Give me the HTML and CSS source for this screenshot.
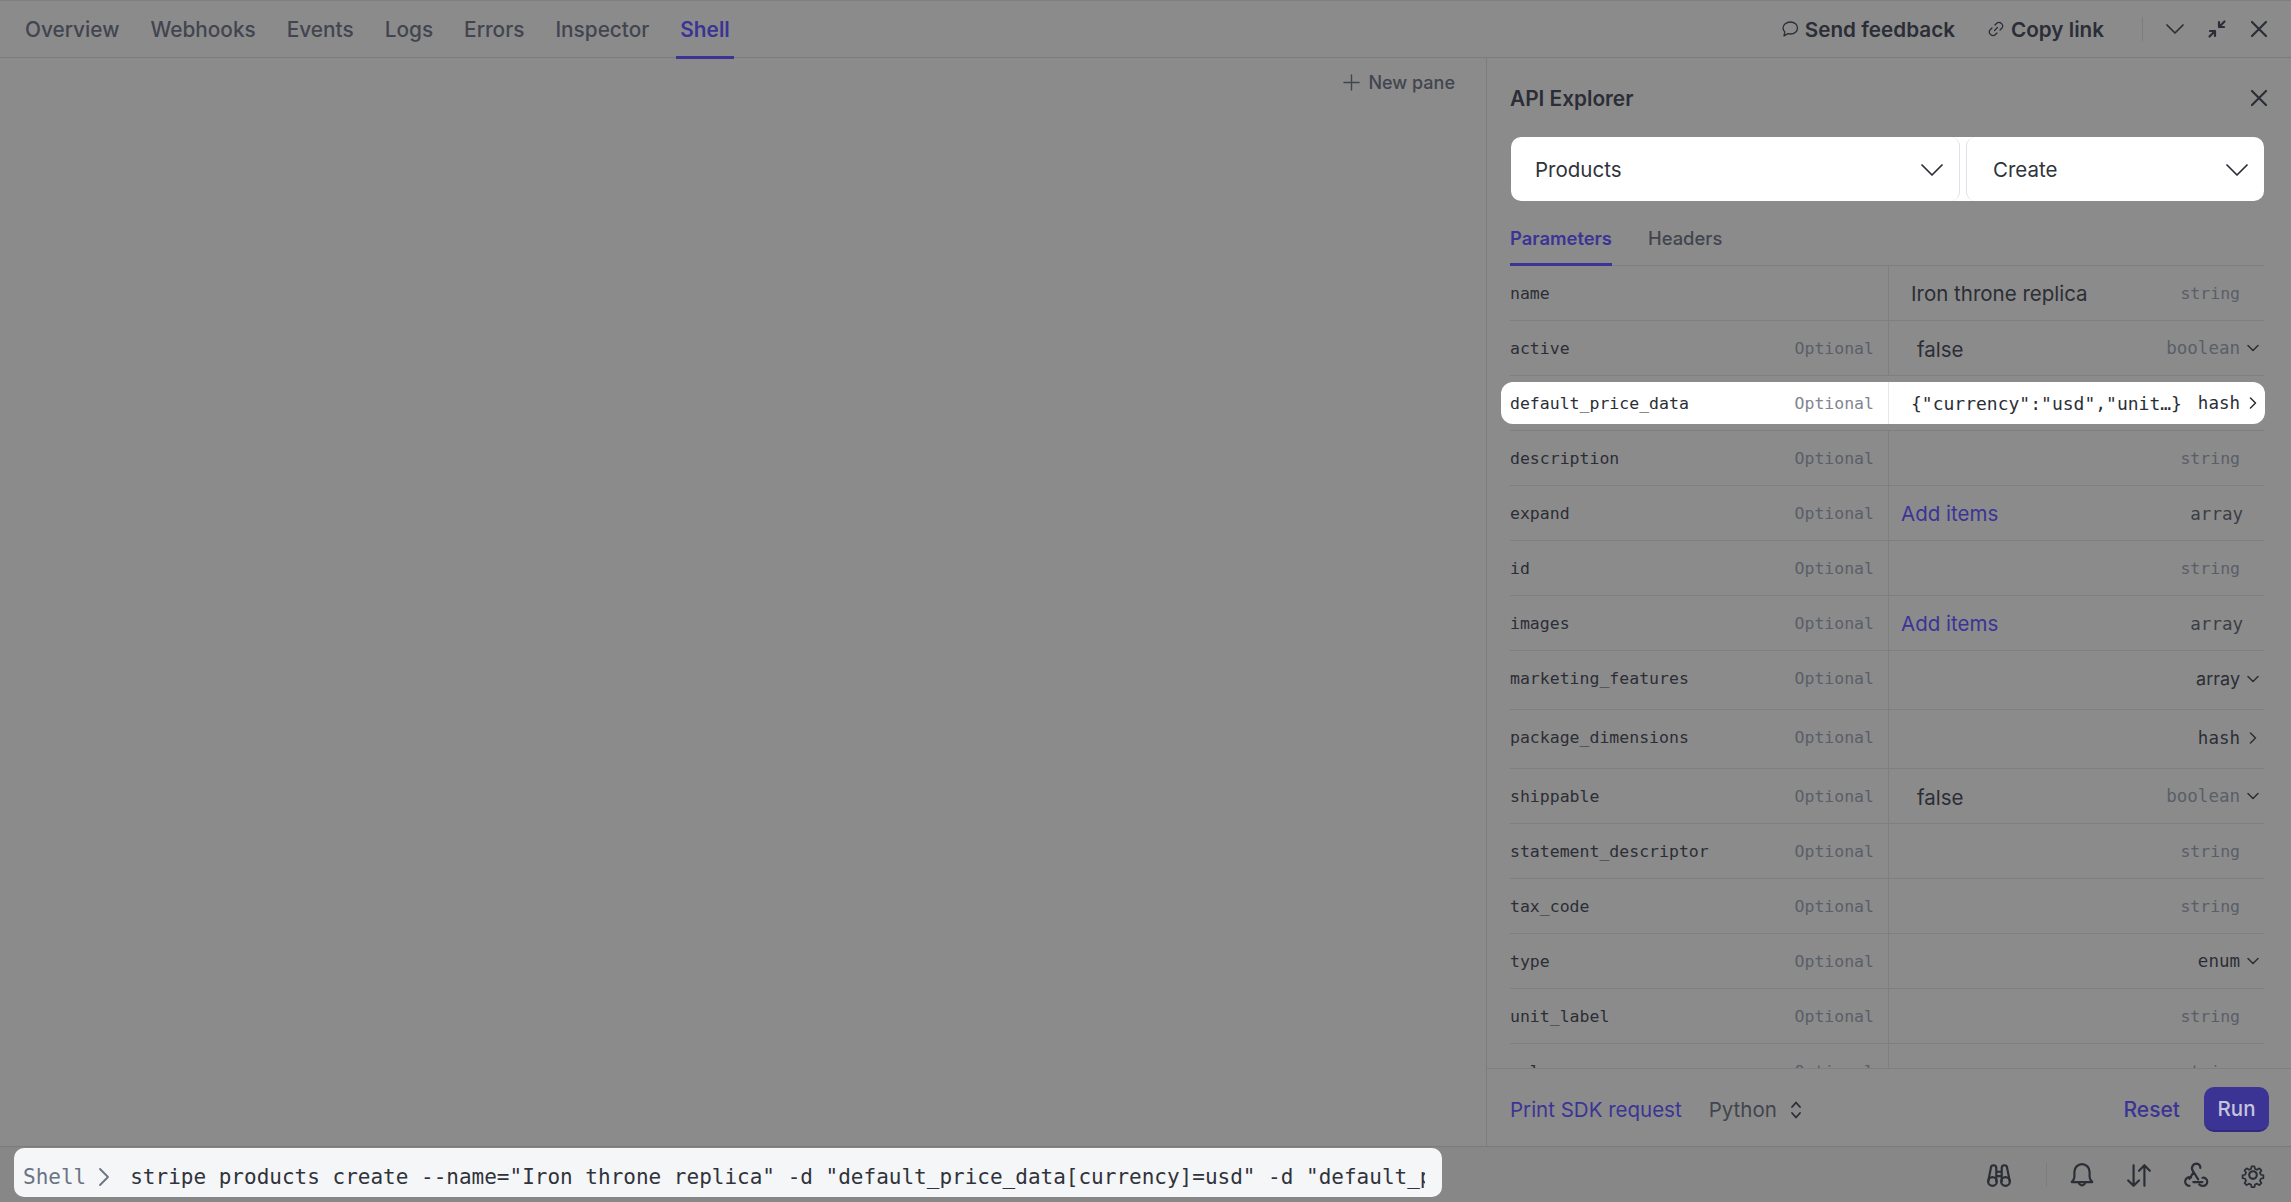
FILE: index.html
```html
<!DOCTYPE html>
<html lang="en">
<head>
<meta charset="utf-8">
<title>Shell</title>
<link rel="stylesheet" href="styles.css">
</head>
<body>
<div class="app">
  <header class="topbar">
    <nav class="tabs">
      <a class="tab">Overview</a><a class="tab">Webhooks</a><a class="tab">Events</a><a class="tab">Logs</a><a class="tab">Errors</a><a class="tab">Inspector</a><a class="tab active">Shell</a>
    </nav>
    <div class="top-actions">
      <a class="action"><svg class="ic16" viewBox="0 0 18 18"><path d="M9.500 2C5.400 2 2 4.700 2 8c0 1.500.7 2.900 1.800 3.900L3 15.800l4-2.100c.8.200 1.600.300 2.500.300 4.100 0 7-2.700 7-6s-2.900-6-7-6z"/></svg>Send feedback</a>
      <a class="action"><svg class="ic16" viewBox="0 0 18 18"><path d="M7.500 10.500l3-3M8 5l1.800-1.800a3 3 0 0 1 4.300 0l.7.700a3 3 0 0 1 0 4.300L13 10M10 13l-1.800 1.800a3 3 0 0 1-4.300 0l-.7-.7a3 3 0 0 1 0-4.300L5 8"/></svg>Copy link</a>
      <span class="vsep"></span>
      <svg class="win" viewBox="0 0 20 20"><path d="M2 6l8 8 8-8"/></svg>
      <svg class="win" viewBox="0 0 20 20"><path class="thick" d="M17.500 2.500L12 8M12 3v5h5M2.500 17.500L8 12M3 12h5v5"/></svg>
      <svg class="win" viewBox="0 0 20 20"><path class="thick" d="M3 3l14 14M17 3L3 17"/></svg>
    </div>
  </header>

  <main class="main">
    <section class="pane">
      <a class="new-pane"><svg class="plus" viewBox="0 0 18 18"><path d="M9 1v16M1 9h16"/></svg>New pane</a>
    </section>

    <aside class="panel">
      <div class="panel-title">
        <h2>API Explorer</h2>
        <svg class="win" viewBox="0 0 20 20"><path class="thick" d="M3 3l14 14M17 3L3 17"/></svg>
      </div>
      <div class="selects">
        <div class="select first">Products<svg class="chev" viewBox="0 0 22 14"><path d="M1 2l10 10L21 2"/></svg></div>
        <div class="select second">Create<svg class="chev" viewBox="0 0 22 14"><path d="M1 2l10 10L21 2"/></svg></div>
      </div>
      <div class="subtabs">
        <a class="subtab on">Parameters</a><a class="subtab">Headers</a>
      </div>
      <div class="params">
        <div class="row"><div class="pname"><code>name</code></div><div class="pval"><span class="val">Iron throne replica</span><code class="t-str">string</code></div></div>
        <div class="row"><div class="pname"><code>active</code><code class="opt">Optional</code></div><div class="pval"><span class="val bool">false</span><code class="t-big muted">boolean</code><svg class="mini" viewBox="0 0 12 12"><path d="M1 3.500l5 5 5-5"/></svg></div></div>
        <div class="row hl"><div class="pname"><code>default_price_data</code><code class="opt">Optional</code></div><div class="pval"><code class="json">{"currency":"usd","unit…}</code><code class="t-big">hash</code><svg class="mini" viewBox="0 0 12 12"><path d="M3.500 1l5 5-5 5"/></svg></div></div>
        <div class="row"><div class="pname"><code>description</code><code class="opt">Optional</code></div><div class="pval"><span class="val"></span><code class="t-str">string</code></div></div>
        <div class="row"><div class="pname"><code>expand</code><code class="opt">Optional</code></div><div class="pval link-cell"><a class="add">Add items</a><code class="t-arr">array</code></div></div>
        <div class="row"><div class="pname"><code>id</code><code class="opt">Optional</code></div><div class="pval"><span class="val"></span><code class="t-str">string</code></div></div>
        <div class="row"><div class="pname"><code>images</code><code class="opt">Optional</code></div><div class="pval link-cell"><a class="add">Add items</a><code class="t-arr">array</code></div></div>
        <div class="row tall"><div class="pname"><code>marketing_features</code><code class="opt">Optional</code></div><div class="pval"><span class="val"></span><span class="t-sans">array</span><svg class="mini" viewBox="0 0 12 12"><path d="M1 3.500l5 5 5-5"/></svg></div></div>
        <div class="row tall"><div class="pname"><code>package_dimensions</code><code class="opt">Optional</code></div><div class="pval"><span class="val"></span><code class="t-big">hash</code><svg class="mini" viewBox="0 0 12 12"><path d="M3.500 1l5 5-5 5"/></svg></div></div>
        <div class="row"><div class="pname"><code>shippable</code><code class="opt">Optional</code></div><div class="pval"><span class="val bool">false</span><code class="t-big muted">boolean</code><svg class="mini" viewBox="0 0 12 12"><path d="M1 3.500l5 5 5-5"/></svg></div></div>
        <div class="row"><div class="pname"><code>statement_descriptor</code><code class="opt">Optional</code></div><div class="pval"><span class="val"></span><code class="t-str">string</code></div></div>
        <div class="row"><div class="pname"><code>tax_code</code><code class="opt">Optional</code></div><div class="pval"><span class="val"></span><code class="t-str">string</code></div></div>
        <div class="row"><div class="pname"><code>type</code><code class="opt">Optional</code></div><div class="pval"><span class="val"></span><code class="t-big">enum</code><svg class="mini" viewBox="0 0 12 12"><path d="M1 3.500l5 5 5-5"/></svg></div></div>
        <div class="row"><div class="pname"><code>unit_label</code><code class="opt">Optional</code></div><div class="pval"><span class="val"></span><code class="t-str">string</code></div></div>
        <div class="row"><div class="pname"><code>url</code><code class="opt">Optional</code></div><div class="pval"><span class="val"></span><code class="t-str">string</code></div></div>
      </div>
      <div class="panel-foot">
        <a class="foot-link">Print SDK request</a>
        <span class="lang">Python<svg class="updown" viewBox="0 0 12 20"><path d="M2 7l4-4.500L10 7M2 13l4 4.500 4-4.500"/></svg></span>
        <span class="spacer"></span>
        <a class="foot-link reset">Reset</a>
        <button class="run" type="button">Run</button>
      </div>
    </aside>
  </main>

  <footer class="bottombar">
    <div class="shell">
      <span class="prompt">Shell</span>
      <svg class="prompt-chev" viewBox="0 0 12 20"><path d="M2 2l8 8-8 8"/></svg>
      <code class="cmd">stripe products create --name="Iron throne replica" -d "default_price_data[currency]=usd" -d "default_price_data[unit_amount]=2000"</code>
    </div>
    <div class="tools">
      <svg class="tool" viewBox="0 0 24 24"><circle cx="6" cy="18" r="4"/><circle cx="18" cy="18" r="4"/><path d="M2 18L4.500 5.500a2.500 2.500 0 0 1 5 0V18M14.500 18V5.500a2.500 2.500 0 0 1 5 0L22 18M9.500 9h5M9.500 13h5"/></svg>
      <span class="vsep tool-sep"></span>
      <svg class="tool" viewBox="0 0 24 24"><path d="M12 2a7 7 0 0 0-7 7v4.500c0 2-1 3.500-2.500 5h19c-1.500-1.500-2.500-3-2.500-5V9a7 7 0 0 0-7-7zM9 18.500a3 3 0 0 0 6 0"/></svg>
      <svg class="tool" viewBox="0 0 24 24"><path d="M7 3v19M2 17l5 5 5-5M17 22V3M12 8l5-5 5 5"/></svg>
      <svg class="tool" viewBox="0 0 24 24"><path d="M9.200 10.300L6 15.500M6 22a4 4 0 1 1 1.500-7.700M12.500 1.500a4.200 4.200 0 0 0-3.300 6.800L14 16M9.500 18.500H18M16 5.500a4 4 0 0 0-3.500-4M18 14.500a3.800 3.800 0 1 1 0 7.500 4 4 0 0 1-3-1.300"/></svg>
      <svg class="tool" viewBox="0 0 24 24"><circle cx="12" cy="12" r="3.500"/><path d="M10.300 2h3.400l.6 3 2.400 1 2.600-1.700 2.400 2.400-1.700 2.600 1 2.400 3 .6v3.400l-3 .6-1 2.400 1.700 2.600-2.400 2.400-2.600-1.700-2.400 1-.6 3h-3.400l-.6-3-2.400-1-2.600 1.700-2.400-2.400 1.700-2.600-1-2.400-3-.6v-3.400l3-.6 1-2.400-1.700-2.600 2.400-2.400 2.600 1.700 2.400-1z" transform="translate(2.400 2.400) scale(.8)"/></svg>
    </div>
  </footer>
</div>
</body>
</html>
```

FILE: styles.css
```css
* { box-sizing: border-box; }
html, body { margin: 0; height: 100%; overflow: hidden; }
body {
  background: #8b8b8b;
  color: #2b2e36;
  font-family: Inter, "Noto Sans", sans-serif;
}
code { font-family: "DejaVu Sans Mono", monospace; }
svg { fill: none; stroke: currentColor; stroke-linecap: round; stroke-linejoin: round; flex: none; }

.app { height: 1202px; display: flex; flex-direction: column; }

/* top bar */
.topbar {
  height: 58px;
  border-top: 1px solid #7f7f7f;
  border-bottom: 1px solid #7c7c7c;
  display: flex;
  align-items: stretch;
  justify-content: space-between;
  padding: 0 22px 0 21px;
  flex: none;
}
.tabs { display: flex; gap: 23px; }
.tab {
  font-size: 20.800px;
  font-weight: 500;
  color: #42454f;
  padding: 1px 4px 0;
  display: flex;
  align-items: center;
  height: 58px;
  margin-bottom: -1px;
  border-bottom: 3px solid transparent;
}
.tab.active { color: #3b3495; border-bottom-color: #3b3495; font-weight: 600; }
.top-actions { display: flex; align-items: center; color: #2b2e36; }
.action { display: flex; align-items: center; gap: 6px; font-size: 20.700px; font-weight: 600; margin-right: 32px; }
.ic16 { width: 18px; height: 18px; stroke-width: 1.300; }
.vsep { width: 1px; height: 24px; background: #7c7c7c; flex: none; }
.top-actions .vsep { margin: 0 22px 0 6px; }
.win { width: 20px; height: 20px; stroke-width: 1.700; color: #2b2e36; }
.top-actions .win { margin-right: 22px; }
.top-actions .win:last-child { margin-right: 0; }
.thick { stroke-width: 2.200; }

/* main */
.main { flex: 1; min-height: 0; display: flex; }
.pane { width: 1486px; display: flex; justify-content: flex-end; align-items: flex-start; padding: 14px 31px 0 0; }
.new-pane { display: flex; align-items: center; gap: 8px; font-size: 18px; font-weight: 500; color: #42454f; height: 20px; }
.plus { width: 17px; height: 17px; stroke-width: 1.500; }

/* API panel */
.panel { flex: 1; min-width: 0; border-left: 1px solid #7c7c7c; display: flex; flex-direction: column; }
.panel-title {
  height: 79px;
  padding: 1px 22px 0 23px;
  display: flex;
  align-items: center;
  justify-content: space-between;
  color: #2b2e36;
}
.panel-title h2 { margin: 0; font-size: 20.800px; font-weight: 600; }
.selects {
  height: 64px;
  margin: 0 27px 0 24px;
  background: #fff;
  border-radius: 10px;
  display: flex;
  gap: 6px;
  font-size: 20.500px;
  color: #30333b;
}
.select {
  height: 64px;
  padding-top: 1px;
  display: flex;
  align-items: center;
  justify-content: space-between;
  border: 1px solid #dfe1e6;
  border-radius: 9px;
}
.select.first { width: 449px; padding-left: 24px; padding-right: 16px; border-left: 0; border-top: 0; border-bottom: 0; }
.select.second { flex: 1; padding-left: 26px; padding-right: 16px; border-right: 0; border-top: 0; border-bottom: 0; }
.chev { width: 22px; height: 14px; stroke-width: 1.700; color: #2b2e36; }
.subtabs {
  height: 65px;
  margin: 0 27px 0 23px;
  border-bottom: 1px solid #7d8083;
  display: flex;
  gap: 36px;
  align-items: stretch;
}
.subtab {
  font-size: 18.400px;
  font-weight: 500;
  color: #42454f;
  display: flex;
  align-items: center;
  padding-top: 11px;
  height: 65px;
  border-bottom: 3px solid transparent;
}
.subtab.on { color: #3b3495; font-weight: 600; border-bottom-color: #3b3495; }
.params { flex: 1; min-height: 0; overflow: hidden; padding: 0 27px 0 23px; }
.row {
  height: 55px;
  border-bottom: 1px solid #7d8083;
  display: grid;
  grid-template-columns: 379px 1fr;
  position: relative;
  font-size: 16.500px;
}
.row.tall { height: 59px; }
.row.tall .pname, .row.tall .pval { padding-bottom: 3px; }
.pname {
  display: flex;
  align-items: center;
  justify-content: space-between;
  padding-right: 14px;
  border-right: 1px solid #7d8083;
  color: #2b2e36;
  position: relative;
}
.opt { color: #5a5e68; }
.pval { display: flex; align-items: center; justify-content: flex-end; padding: 0 5px 0 22px; position: relative; }
.val { flex: 1; font-size: 20.500px; color: #2b2e36; }
.val.bool { padding-left: 6px; padding-top: 3px; }
.t-str { color: #5a5e68; margin-right: 19px; }
.t-big { font-size: 17.500px; color: #2b2e36; margin-right: 7px; }
.t-big.muted { color: #5a5e68; }
.t-arr { font-size: 17.500px; color: #3b3e46; margin-right: 16px; padding-top: 2px; }
.t-sans { font-size: 18px; color: #2b2e36; margin-right: 7px; }
.mini { width: 12px; height: 12px; stroke-width: 1.500; color: #2b2e36; }
.link-cell { padding-left: 12px; }
.add { flex: 1; font-size: 20.500px; color: #3b3495; }
.json { flex: 1; font-size: 18px; color: #2b2e36; }

/* highlighted row */
.row.hl::before {
  content: "";
  position: absolute;
  inset: 6px -1px 6px -9px;
  background: #fff;
  border-radius: 12px;
}
.row.hl .pname { border-right-color: #e6e7ea; height: 42px; margin-top: 6px; }
.row.hl .pval { height: 42px; margin-top: 6px; }
.row.hl .opt { color: #7f8591; }

.panel-foot {
  height: 78px;
  flex: none;
  border-top: 1px solid #7d8083;
  display: flex;
  align-items: center;
  padding: 4px 22px 0 23px;
  font-size: 20.500px;
}
.foot-link { color: #3b3495; font-weight: 400; }
.foot-link.reset { font-size: 21px; font-weight: 500; }
.lang { margin-left: 27px; color: #42454f; display: flex; align-items: center; gap: 13px; }
.updown { width: 12px; height: 20px; stroke-width: 1.800; color: #2b2e36; }
.spacer { flex: 1; }
.run {
  margin-left: 24px;
  width: 65px;
  height: 45px;
  border: 0;
  border-bottom: 2px solid #2f2a7e;
  border-radius: 10px;
  background: #3b3495;
  color: #c4c4dc;
  font: 500 20.500px Inter, sans-serif;
  padding: 0;
}

/* bottom bar */
.bottombar {
  height: 56px;
  flex: none;
  background: #878787;
  border-top: 1px solid #7a7a7a;
  display: flex;
  align-items: flex-start;
  justify-content: space-between;
  padding: 1px 25px 0 14px;
}
.shell {
  width: 1428px;
  height: 49px;
  background: #f5f6f8;
  border-radius: 10px;
  display: flex;
  align-items: center;
  padding: 8px 17px 0 9px;
  font-size: 21px;
  overflow: hidden;
}
.prompt { font-family: "DejaVu Sans Mono", monospace; color: #6a7383; white-space: nowrap; }
.prompt-chev { width: 12px; height: 20px; stroke-width: 1.800; color: #6a7383; margin: 0 20px 0 12px; }
.cmd { color: #30333b; white-space: nowrap; flex: 1; min-width: 0; overflow: hidden; }
.tools { display: flex; align-items: center; height: 54px; color: #2b2e36; }
.tool { width: 26px; height: 26px; stroke-width: 2; margin-left: 31px; }
.tool-sep { margin: 0 -9px 0 34px; }
```
